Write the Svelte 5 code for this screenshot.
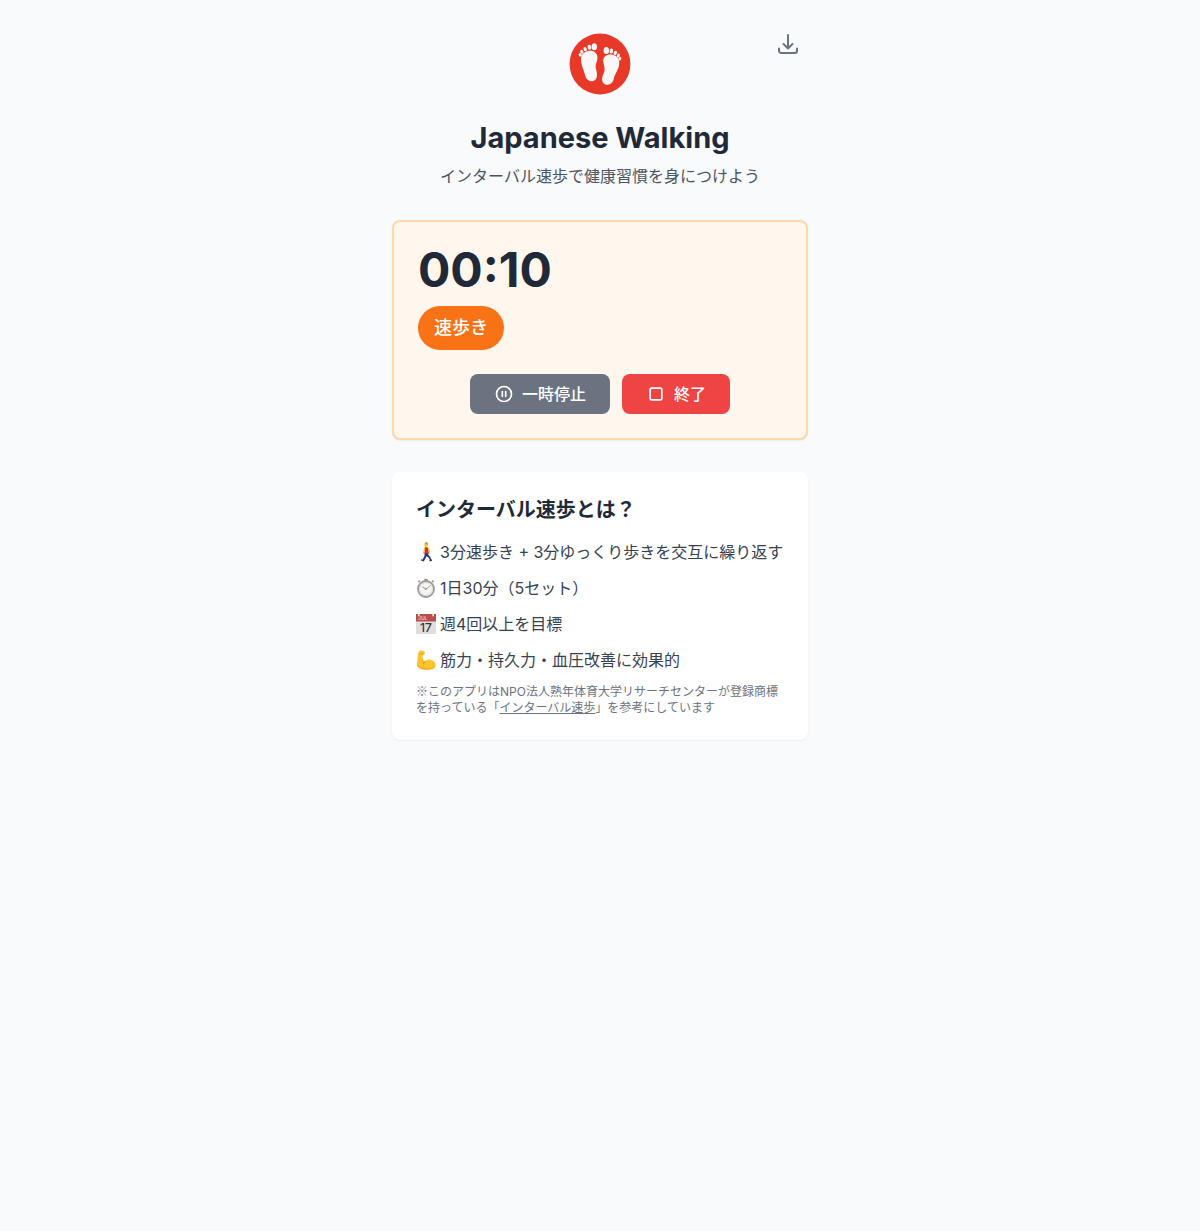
<script>
  let seconds = $state(10);
  const clock = $derived(
    String(Math.floor(seconds / 60)).padStart(2, '0') + ':' + String(seconds % 60).padStart(2, '0')
  );
</script>

<main>
  <header>
    <div class="top">
      <svg class="logo" viewBox="0 0 64 64" role="img" aria-label="Japanese Walking">
        <circle cx="32" cy="32" r="30.4" fill="#e83828" />
        <g fill="#faf8f7">
          <path d="M19.300 19.200C24.500 17.800 29.300 20.200 29.500 25.500C29.600 29 27.500 31.300 27.600 34.800C27.700 37.500 29.200 39.500 29 42.900C28.800 47 26.600 49.300 23.300 49.200C19.700 49.200 17.700 46.400 16.900 42.600C15.900 38 13.200 33.300 13 28.200C12.800 23.500 15.100 20.300 19.300 19.200Z" />
          <ellipse cx="26.300" cy="14.700" rx="2.700" ry="3.500" />
          <ellipse cx="21.400" cy="15.300" rx="1.800" ry="2.500" transform="rotate(-10 21.4 15.3)" />
          <ellipse cx="17.200" cy="17.100" rx="1.600" ry="2.200" transform="rotate(-20 17.2 17.1)" />
          <ellipse cx="13.800" cy="19.700" rx="1.500" ry="2" transform="rotate(-28 13.8 19.7)" />
          <ellipse cx="12.200" cy="22.900" rx="1.500" ry="1.800" transform="rotate(-35 12.2 22.9)" />
          <path d="M44.700 22.800C39.700 21.600 35.300 23.900 35.200 28.800C35.100 32.500 37 34.500 36.600 38C36.300 41 34.300 43.300 34.100 46.500C33.900 50.400 35.900 52.700 39.200 52.800C43.200 52.900 45.100 49.800 45.900 46.300C47 41.700 50.700 37.700 51.200 32C51.700 27 49 23.800 44.700 22.800Z" />
          <ellipse cx="38.300" cy="18.400" rx="2.700" ry="3.500" />
          <ellipse cx="43.300" cy="19" rx="1.800" ry="2.500" transform="rotate(10 43.3 19)" />
          <ellipse cx="47.300" cy="20.900" rx="1.600" ry="2.300" transform="rotate(20 47.3 20.9)" />
          <ellipse cx="50.400" cy="23.600" rx="1.500" ry="2" transform="rotate(25 50.4 23.6)" />
          <ellipse cx="51.900" cy="26.700" rx="1.400" ry="1.800" transform="rotate(25 51.9 26.7)" />
        </g>
      </svg>
      <button class="install" type="button" aria-label="インストール">
        <svg viewBox="0 0 24 24" class="line">
          <path d="M3 16.5v2.25A2.25 2.25 0 0 0 5.25 21h13.5A2.25 2.25 0 0 0 21 18.75V16.5M16.5 12 12 16.5m0 0L7.5 12m4.5 4.5V3" />
        </svg>
      </button>
    </div>
    <h1>Japanese Walking</h1>
    <p>インターバル速歩で健康習慣を身につけよう</p>
  </header>

  <section class="timer">
    <div class="time" role="timer">{clock}</div>
    <span class="phase">速歩き</span>
    <div class="actions">
      <button class="pause" type="button">
        <svg viewBox="0 0 24 24" class="line">
          <circle cx="12" cy="12" r="9" />
          <path d="M10 9v6m4-6v6" />
        </svg>
        一時停止
      </button>
      <button class="stop" type="button">
        <svg viewBox="0 0 24 24" class="line">
          <rect x="5" y="5" width="14" height="14" rx="2" />
        </svg>
        終了
      </button>
    </div>
  </section>

  <section class="about">
    <h2>インターバル速歩とは？</h2>
    <ul>
      <li>
        <svg viewBox="0 0 20 20" aria-hidden="true">
          <path d="M8.600 10.500 8.500 14 6.400 17.800 8.300 18.600 10.600 14.300 12.800 15.800 14 18.600 15.500 17.900 14.200 14.700 12.500 13V10.500Z" fill="#26377c" />
          <path d="m5.400 17.300 2.900 1.300-.3.900-3.200-1.200ZM13.500 18.200l2.300-.7.400 1-2.400.9Z" fill="#1e2230" />
          <path d="M8.700 5.500c1.200-.9 2.800-.5 3.500.8l.7 4.900-4.400.2Z" fill="#e02d34" />
          <path d="M8.600 6.200 8 8.800l-.5 2.400M12.400 6.500l.9 3.100-.3 2.300" fill="none" stroke="#f7b928" stroke-width="1.100" stroke-linecap="round" />
          <path d="M8.600 1.500c.6-1.300 2.900-1.200 3.200.4.200 1-.3 1.900-1 2.400v1.200H9.200L9 4.400 8.300 3.500Z" fill="#f8c335" />
          <path d="M8.700 1.500C9.300-.2 12-.1 12.100 2l-.6 1.500-.8-1.300Z" fill="#d29525" />
        </svg>
        3分速歩き + 3分ゆっくり歩きを交互に繰り返す
      </li>
      <li>
        <svg viewBox="0 0 20 20" aria-hidden="true">
          <path d="M8.300.8h3.400v2.500H8.300Z" fill="#949494" />
          <path d="m15.500 3.200 1.300-1.100 1.400 1.500-1.200 1.200ZM4.500 3.200 3.200 2.100 1.800 3.600 3 4.800Z" fill="#999" />
          <circle cx="10" cy="11" r="8" fill="#f4f4f2" stroke="#9a9b9b" stroke-width="1.800" />
          <circle cx="10" cy="11" r="6.200" fill="none" stroke="#b4b5b3" stroke-width="1" stroke-dasharray=".5 1.120" />
          <path d="M10 11 6.500 8.900" stroke="#777" stroke-width=".8" />
          <path d="m9.200 11.500 5.100-3.700" stroke="#cd6757" stroke-width=".7" />
          <circle cx="10" cy="11" r=".8" fill="#888" />
        </svg>
        1日30分（5セット）
      </li>
      <li>
        <svg viewBox="0 0 20 20" aria-hidden="true">
          <path d="M0 1h20v19H0Z" fill="#dedede" />
          <path d="M0 0h20v7.500H0Z" fill="#b84f4e" />
          <path d="M2.800 0v2.300M17.200 0v2.300" stroke="#eee" stroke-width="1.600" />
          <text x="2" y="6" class="month">JUL</text>
          <text x="10" y="18" text-anchor="middle" class="day">17</text>
        </svg>
        週4回以上を目標
      </li>
      <li>
        <svg viewBox="0 0 20 20" aria-hidden="true">
          <path d="M3.200 1.100C4.700.1 7.500.7 8.600 2.100c.8 1.100.1 2.200-1 2.300L6.400 5.500 7 10.300c.3 1.300 1.200 1.600 2 .8C11.600 8.500 16 9 18.500 12c1.300 1.600 1.600 4.100.4 5.300-2.800 2.700-10.400 3.200-14.200 1.500-3.700-1.700-4.200-4.100-3.500-7.900C1.700 8.100 1.800 3.400 3.200 1.100Z" fill="#fcc529" />
          <path d="M1.300 12.100c-.2 4.300 3 6.400 8.300 6.500 4.200.1 7.800-.6 9.500-2.200-.3 2.200-4.300 3.200-9.100 3.100C4.300 19.400.3 17.400 1.300 12.100Z" fill="#ee9d18" />
          <path d="M4.200 3.800c.8-.4 1.900-.2 2.900.6M6.800 9.500c.1 1.600.8 2.700 2 3.300M9 11.100c-1.200 1-1.700 2.200-1.500 3.200" fill="none" stroke="#db8615" stroke-width=".7" stroke-linecap="round" />
        </svg>
        筋力・持久力・血圧改善に効果的
      </li>
    </ul>
    <p class="note">
      <span class="mark">※</span>このアプリはNPO法人熟年体育大学リサーチセンターが登録商標を持っている「<a href="#interval">インターバル速歩</a>」を参考にしています
    </p>
  </section>
</main>

<style>
  :global(body) {
    margin: 0;
    background: #f9fafb;
    color: #1f2937;
    font-family: Inter, "Noto Sans CJK JP", sans-serif;
    font-size: 16px;
    line-height: 24px;
  }
  :global(body) {
    background: #f8fafc;
  }
  main {
    box-sizing: border-box;
    max-width: 448px;
    margin: 0 auto;
    padding: 32px 16px;
  }
  h1, h2, p, ul {
    margin: 0;
    padding: 0;
  }
  button {
    font: inherit;
    border: 0;
    cursor: pointer;
  }
  .line {
    fill: none;
    stroke: currentColor;
    stroke-width: 2;
    stroke-linecap: round;
    stroke-linejoin: round;
  }
  header {
    margin-bottom: 32px;
    text-align: center;
  }
  .top {
    display: grid;
    grid-template-columns: 1fr 64px 1fr;
    align-items: start;
    margin-bottom: 24px;
  }
  .logo {
    grid-column: 2;
    display: block;
    width: 64px;
    height: 64px;
  }
  .install {
    justify-self: end;
    margin-right: 8px;
    padding: 0;
    color: #6b7280;
    background: none;
  }
  .install svg {
    display: block;
    width: 24px;
    height: 24px;
  }
  h1 {
    margin-bottom: 8px;
    font-size: 29px;
    line-height: 36px;
    font-weight: 700;
  }
  header p {
    color: #4b5563;
  }
  .timer {
    margin-bottom: 32px;
    padding: 24px;
    border: 2px solid #fed7aa;
    border-radius: 8px;
    background: #fff7ed;
    box-shadow: 0 1px 2px rgb(0 0 0 / 0.05);
  }
  .time {
    margin-bottom: 12px;
    font-size: 48px;
    line-height: 48px;
    font-weight: 700;
  }
  .phase {
    display: block;
    width: fit-content;
    padding: 8px 16px;
    border-radius: 22px;
    background: #f97316;
    color: #fff;
    font-size: 18px;
    line-height: 28px;
    font-weight: 500;
  }
  .actions {
    display: flex;
    justify-content: center;
    gap: 12px;
    margin-top: 24px;
  }
  .actions button {
    display: flex;
    align-items: center;
    gap: 8px;
    padding: 8px 24px;
    border-radius: 8px;
    color: #fff;
    font-weight: 500;
  }
  .actions svg {
    width: 20px;
    height: 20px;
  }
  .pause {
    background: #6b7280;
  }
  .stop {
    background: #ef4444;
  }
  .about {
    padding: 24px;
    border-radius: 8px;
    background: #fff;
    box-shadow: 0 1px 2px rgb(0 0 0 / 0.05);
  }
  h2 {
    margin-bottom: 16px;
    font-size: 20px;
    line-height: 28px;
    font-weight: 600;
  }
  ul {
    display: grid;
    gap: 12px;
    list-style: none;
    color: #374151;
  }
  li {
    display: flex;
    align-items: center;
    gap: 4px;
  }
  li svg {
    flex: none;
    width: 20px;
    height: 20px;
  }
  .month {
    font-size: 5px;
    font-weight: 600;
    fill: #eac4c2;
  }
  .day {
    font-size: 12px;
    font-weight: 500;
    fill: #333;
  }
  .note {
    margin-top: 12px;
    color: #6b7280;
    font-size: 12px;
    line-height: 16px;
  }
  .mark {
    font-family: "Noto Sans CJK JP", sans-serif;
    line-height: 1;
  }
  a {
    color: inherit;
    text-decoration: underline;
  }
</style>
